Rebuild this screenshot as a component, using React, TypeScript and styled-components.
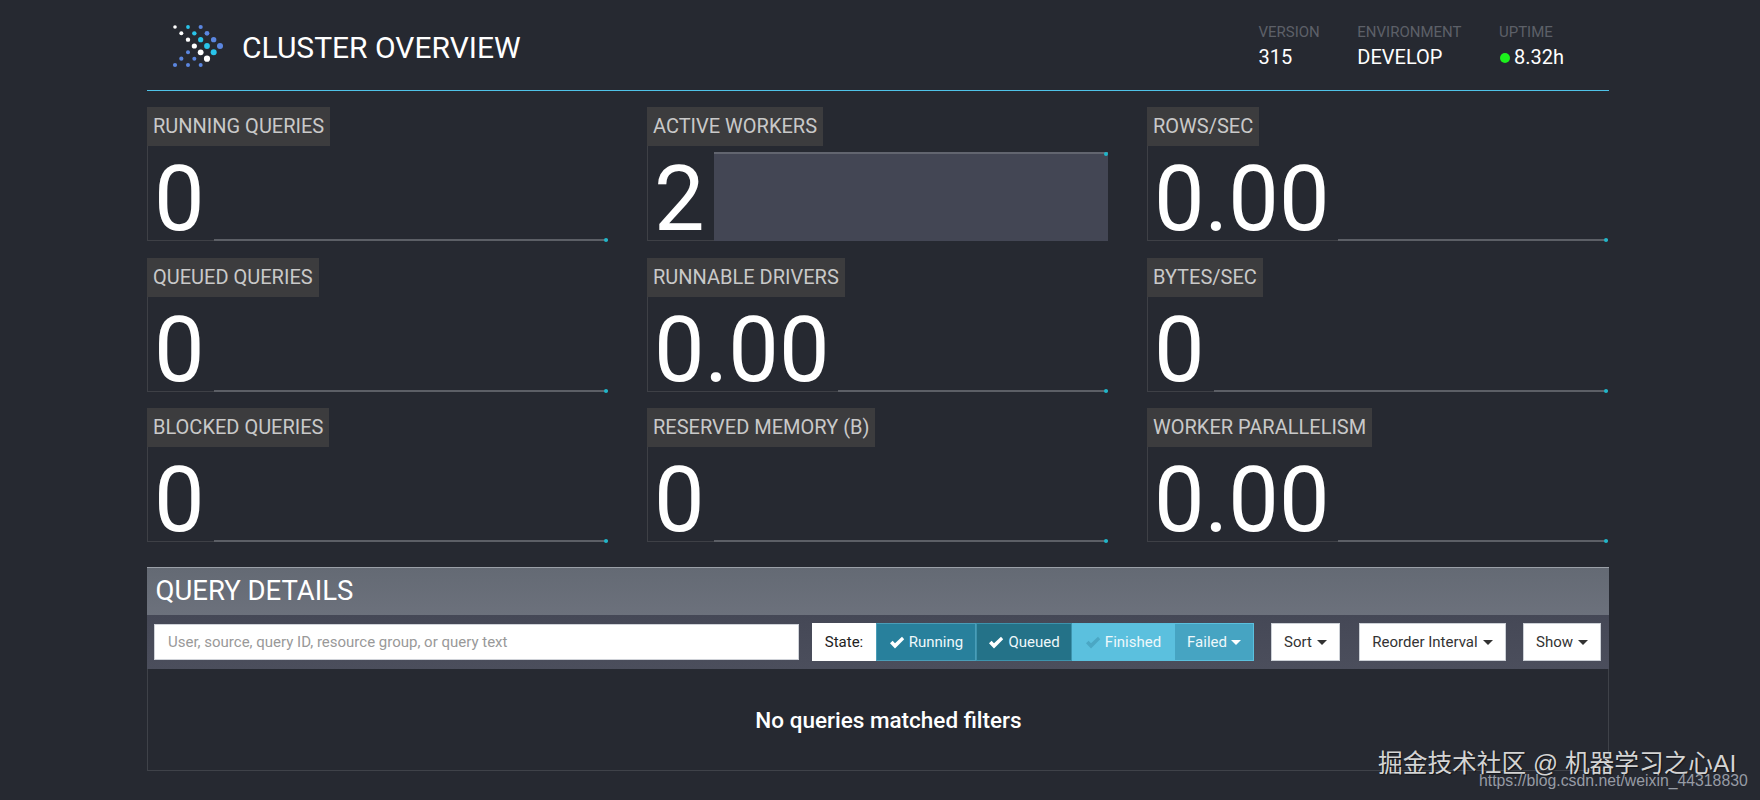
import React from "react";
import styled, { createGlobalStyle } from "styled-components";

const Global = createGlobalStyle`
  html, body { margin: 0; padding: 0; background: #262931; }
  body { font-family: Roboto, "Liberation Sans", sans-serif; color: #fff; }
  * { box-sizing: border-box; }
`;

const Page = styled.div`
  position: relative;
  width: 1760px;
  height: 800px;
  overflow: hidden;
  padding-left: 147px;
`;
const Container = styled.div`
  width: 1462px;
`;
const Header = styled.header`
  height: 91px;
  border-bottom: 1px solid #4fc3e8;
  display: flex;
  align-items: flex-start;
`;
const Brand = styled.div`
  display: flex;
  align-items: center;
  margin: 15px 0 0 18px;
  gap: 7px;
`;
const Title = styled.h1`
  margin: 5px 0 0;
  font-size: 30px;
  font-weight: 400;
  line-height: 36px;
  color: #fff;
`;
const Info = styled.div`
  margin: 22px 45px 0 auto;
  display: flex;
  gap: 37.5px;
`;
const InfoItem = styled.div`
  display: flex;
  flex-direction: column;
`;
const InfoLabel = styled.div`
  font-size: 15px;
  line-height: 20px;
  color: #5d6068;
`;
const InfoValue = styled.div`
  margin-top: 3px;
  font-size: 20px;
  line-height: 24px;
  color: #fff;
  display: flex;
  align-items: center;
`;
const Status = styled.span`
  width: 10px;
  height: 10px;
  margin: 2px 4px 0 1px;
  border-radius: 50%;
  background: #1cf01c;
`;
const Grid = styled.section`
  display: grid;
  grid-template-columns: repeat(3, 461px);
  column-gap: 39px;
  row-gap: 16.5px;
  margin-top: 16px;
`;
const Card = styled.div`
  display: flex;
  flex-direction: column;
  height: 134px;
`;
const CardLabel = styled.div`
  align-self: flex-start;
  height: 39px;
  padding: 0 6px;
  font-size: 20px;
  line-height: 38px;
  color: #c9c9c9;
  background: #3c3c3e;
`;
const CardBody = styled.div`
  flex: 1;
  min-height: 0;
  display: flex;
  border-left: 1px solid #3e4046;
  border-bottom: 1px solid #3e4046;
`;
const BigNumber = styled.div`
  height: 94px;
  padding: 0 9px 0 6px;
  font-size: 90px;
  line-height: 108px;
  font-weight: 400;
  color: #fff;
`;
const Spark = styled.div`
  position: relative;
  flex: 1;
  display: flex;
  align-items: flex-end;
  margin-bottom: -1px;
`;
const SparkFill = styled.div<{ $full?: boolean }>`
  flex: 1;
  height: ${(p) => (p.$full ? "89px" : "2px")};
  background: ${(p) => (p.$full ? "#434654" : "#5c5f66")};
  border-top: ${(p) => (p.$full ? "2px solid #62656f" : "0")};
`;
const SparkDot = styled.span<{ $full?: boolean }>`
  position: absolute;
  right: 0;
  bottom: ${(p) => (p.$full ? "85px" : "-1px")};
  width: 4px;
  height: 4px;
  border-radius: 50%;
  background: #1fb6c9;
`;
const Details = styled.section`
  margin-top: 25px;
`;
const DetailsHead = styled.div`
  height: 48px;
  padding: 0 8.5px;
  border-top: 1px solid #9ba0a8;
  background: linear-gradient(#646a74, #6c717c);
  font-size: 27.5px;
  line-height: 46px;
  color: #fff;
`;
const Toolbar = styled.div`
  height: 54px;
  padding: 0 7px;
  display: flex;
  align-items: center;
  background: linear-gradient(#454856, #4b4e5c);
`;
const SearchInput = styled.input`
  width: 645px;
  height: 36px;
  margin-right: 13px;
  padding: 0 13px;
  border: 1px solid #cfd2d8;
  border-radius: 0;
  background: #fff;
  font-family: inherit;
  font-size: 15px;
  color: #333;
  &::placeholder { color: #999; opacity: 1; }
`;
const StateGroup = styled.div`
  display: flex;
  height: 38px;
`;
const StateLabel = styled.div`
  width: 64px;
  background: #fff;
  color: #222;
  font-size: 15px;
  line-height: 38px;
  text-align: center;
`;
const tones = {
  running: { bg: "#28809c", edge: "#4a9db8", check: "#fff" },
  queued: { bg: "#247288", edge: "#3d93ad", check: "#fff" },
  finished: { bg: "#5bc0de", edge: "#5bc0de", check: "#4ba7c4" },
  failed: { bg: "#46a4c2", edge: "#5bc0de", check: "#fff" },
};
type Tone = keyof typeof tones;
const StateButton = styled.div<{ $tone: Tone; $w: number }>`
  width: ${(p) => p.$w}px;
  display: flex;
  align-items: center;
  justify-content: center;
  gap: 4px;
  font-size: 15px;
  color: #eef8fb;
  background: ${(p) => tones[p.$tone].bg};
  border: 1px solid ${(p) => tones[p.$tone].edge};
  svg { color: ${(p) => tones[p.$tone].check}; }
`;
const MenuButton = styled.div<{ $w: number; $gap?: number }>`
  width: ${(p) => p.$w}px;
  height: 38px;
  margin-left: ${(p) => p.$gap ?? 17}px;
  display: flex;
  align-items: center;
  justify-content: center;
  gap: 5px;
  background: #fff;
  border: 1px solid #ccd0d6;
  color: #333;
  font-size: 15px;
`;
const Caret = styled.i<{ $light?: boolean }>`
  width: 0;
  height: 0;
  border-left: 5px solid transparent;
  border-right: 5px solid transparent;
  border-top: 5px solid ${(p) => (p.$light ? "#fff" : "#333")};
`;
const EmptyPanel = styled.div`
  height: 102px;
  padding-left: 21px;
  border: 1px solid #3f4249;
  border-top: 0;
  display: flex;
  align-items: center;
  justify-content: center;
  font-size: 22.5px;
  font-weight: 500;
  color: #fff;
`;
const Watermark = styled.div`
  position: absolute;
  left: 1378px;
  top: 747px;
  font-family: "Liberation Sans", "Noto Sans CJK SC", sans-serif;
  font-size: 24.7px;
  line-height: 34px;
  color: #d4d4d4;
  white-space: nowrap;
  text-shadow: 1px 1px 1px rgba(0, 0, 0, 0.5);
`;
const WatermarkUrl = styled.div`
  position: absolute;
  left: 1479px;
  top: 771px;
  font-family: "Liberation Sans", sans-serif;
  font-size: 15.8px;
  line-height: 20px;
  color: #969ba5;
  white-space: nowrap;
`;

const CheckMark = () => (
  <svg width="16" height="13" viewBox="0 0 16 13" aria-hidden="true">
    <path d="M1 7.2 L3.6 4.8 L6 7.2 L13 0.8 L15.2 3.2 L6 12.4 Z" fill="currentColor" />
  </svg>
);

const W = "#ffffff";
const C = "#29c4ea";
const B = "#5b86e0";
const dots: [number, number, number, string][] = [
  [30, 36, 1.8, W], [69, 36, 1.9, C], [107, 36, 2.1, B],
  [49, 55, 2, W], [88, 55, 2.2, C], [126, 55, 2.4, B],
  [69, 74, 2.2, W], [107, 74, 2.6, C], [146, 74, 2.7, B],
  [88, 93, 2.6, W], [126, 93, 2.9, C], [165, 93, 3, B],
  [69, 112, 2, B], [107, 112, 2.9, W], [146, 112, 3, C],
  [49, 131, 2.1, B], [88, 131, 2, B], [126, 131, 3.1, W],
  [30, 150, 2.1, B], [69, 150, 2, B], [107, 150, 2, B],
];
const Logo = () => (
  <svg width="70" height="60" viewBox="0 0 70 60" aria-hidden="true">
    {dots.map(([x, y, r, f], i) => (
      <circle key={i} cx={x / 3} cy={y / 3} r={r} fill={f} />
    ))}
  </svg>
);

const metrics: { label: string; value: string; full?: boolean }[] = [
  { label: "RUNNING QUERIES", value: "0" },
  { label: "ACTIVE WORKERS", value: "2", full: true },
  { label: "ROWS/SEC", value: "0.00" },
  { label: "QUEUED QUERIES", value: "0" },
  { label: "RUNNABLE DRIVERS", value: "0.00" },
  { label: "BYTES/SEC", value: "0" },
  { label: "BLOCKED QUERIES", value: "0" },
  { label: "RESERVED MEMORY (B)", value: "0" },
  { label: "WORKER PARALLELISM", value: "0.00" },
];

export default function App() {
  return (
    <Page>
      <Global />
      <Container>
        <Header>
          <Brand>
            <Logo />
            <Title>CLUSTER OVERVIEW</Title>
          </Brand>
          <Info>
            <InfoItem>
              <InfoLabel>VERSION</InfoLabel>
              <InfoValue>315</InfoValue>
            </InfoItem>
            <InfoItem>
              <InfoLabel>ENVIRONMENT</InfoLabel>
              <InfoValue>DEVELOP</InfoValue>
            </InfoItem>
            <InfoItem>
              <InfoLabel>UPTIME</InfoLabel>
              <InfoValue>
                <Status />
                8.32h
              </InfoValue>
            </InfoItem>
          </Info>
        </Header>
        <Grid>
          {metrics.map((m) => (
            <Card key={m.label}>
              <CardLabel>{m.label}</CardLabel>
              <CardBody>
                <BigNumber>{m.value}</BigNumber>
                <Spark>
                  <SparkFill $full={m.full} />
                  <SparkDot $full={m.full} />
                </Spark>
              </CardBody>
            </Card>
          ))}
        </Grid>
        <Details>
          <DetailsHead>QUERY DETAILS</DetailsHead>
          <Toolbar>
            <SearchInput placeholder="User, source, query ID, resource group, or query text" />
            <StateGroup>
              <StateLabel>State:</StateLabel>
              <StateButton $tone="running" $w={100}>
                <CheckMark />
                Running
              </StateButton>
              <StateButton $tone="queued" $w={96}>
                <CheckMark />
                Queued
              </StateButton>
              <StateButton $tone="finished" $w={102}>
                <CheckMark />
                Finished
              </StateButton>
              <StateButton $tone="failed" $w={80}>
                Failed
                <Caret $light />
              </StateButton>
            </StateGroup>
            <MenuButton $w={69}>
              Sort
              <Caret />
            </MenuButton>
            <MenuButton $w={147} $gap={19}>
              Reorder Interval
              <Caret />
            </MenuButton>
            <MenuButton $w={78}>
              Show
              <Caret />
            </MenuButton>
          </Toolbar>
          <EmptyPanel>No queries matched filters</EmptyPanel>
        </Details>
      </Container>
      <Watermark>掘金技术社区 @ 机器学习之心AI</Watermark>
      <WatermarkUrl>https://blog.csdn.net/weixin_44318830</WatermarkUrl>
    </Page>
  );
}
